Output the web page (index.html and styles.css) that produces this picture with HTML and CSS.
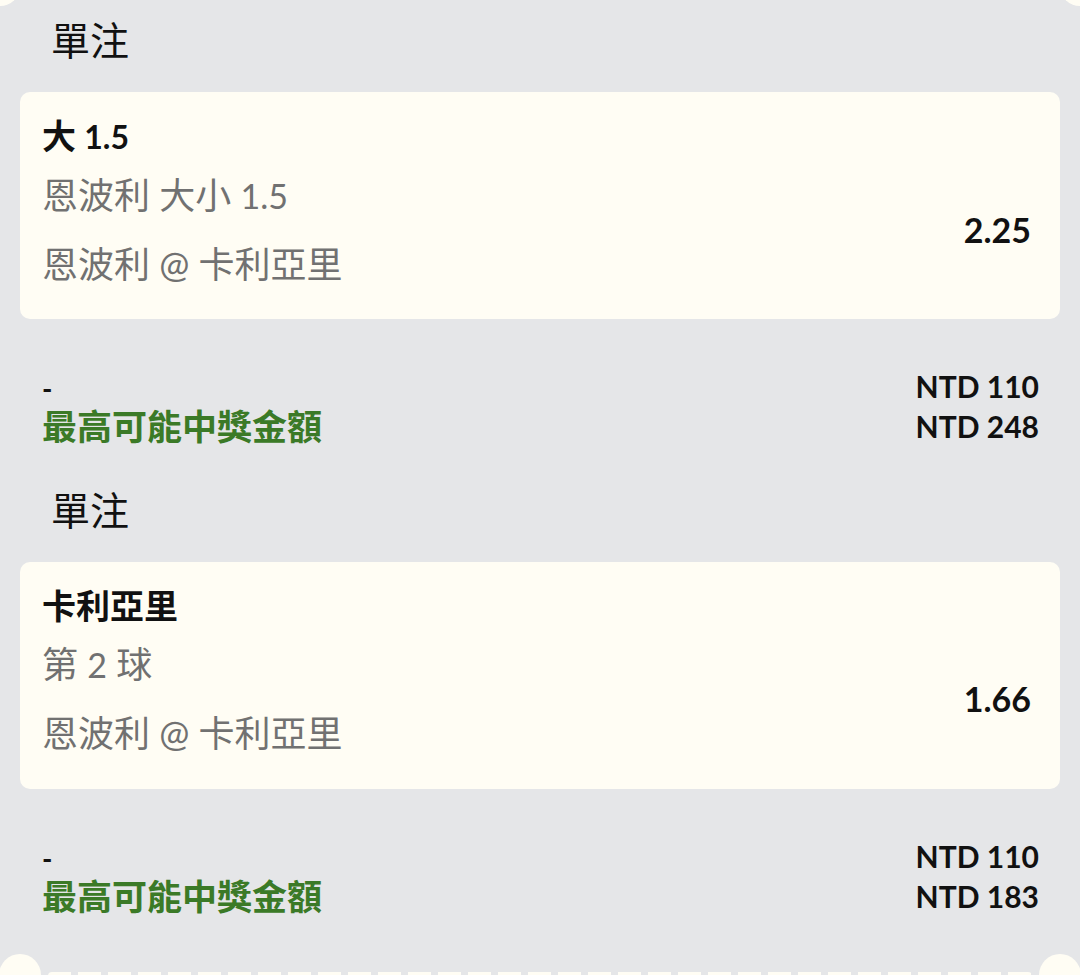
FILE: index.html
```html
<!DOCTYPE html>
<html lang="zh-Hant">
<head>
<meta charset="UTF-8">
<meta name="viewport" content="width=device-width, initial-scale=1.0">
<title>單注</title>
<link rel="stylesheet" href="styles.css">
</head>
<body>

<div class="notch notch-tl"></div>
<div class="notch notch-tr"></div>

<div class="slip">
    <section class="bet">
        <h2 class="bet-type">單注</h2>
        <div class="card">
            <div class="selection">大 <span class="num">1.5</span></div>
            <div class="card-row">
                <div class="details">
                    <p class="market">恩波利 大小 <span class="num">1.5</span></p>
                    <p class="event">恩波利 @ 卡利亞里</p>
                </div>
                <div class="odds">2.25</div>
            </div>
        </div>
        <div class="summary">
            <div class="summary-left">
                <p class="stake">-</p>
                <p class="payout-label">最高可能中獎金額</p>
            </div>
            <div class="summary-right">
                <p>NTD 110</p>
                <p>NTD 248</p>
            </div>
        </div>
    </section>

    <section class="bet">
        <h2 class="bet-type">單注</h2>
        <div class="card">
            <div class="selection">卡利亞里</div>
            <div class="card-row">
                <div class="details">
                    <p class="market">第 <span class="num">2</span> 球</p>
                    <p class="event">恩波利 @ 卡利亞里</p>
                </div>
                <div class="odds">1.66</div>
            </div>
        </div>
        <div class="summary">
            <div class="summary-left">
                <p class="stake">-</p>
                <p class="payout-label">最高可能中獎金額</p>
            </div>
            <div class="summary-right">
                <p>NTD 110</p>
                <p>NTD 183</p>
            </div>
        </div>
    </section>
</div>

<div class="tear"></div>
<div class="notch notch-bl"></div>
<div class="notch notch-br"></div>

</body>
</html>
```

FILE: styles.css
```css
body { margin: 0; height: 975px; overflow: hidden; position: relative; background-color: #e5e6e8; color: #111; font-family: 'Lato', 'Noto Sans CJK TC', sans-serif; }
p { margin: 0; }

.slip { padding: 0 20px; }
.bet { height: 470px; }
.bet-type { margin: 0; padding-left: 31px; height: 92px; line-height: 81px; font-size: 39px; font-weight: 400; }

.card { background-color: #fffdf4; border-radius: 10px; padding: 16px 29px 23px 22px; height: 188px; }
.selection { font-size: 34px; font-weight: 700; line-height: 56px; }
.selection .num { font-size: 32px; }
.card-row { display: flex; justify-content: space-between; align-items: center; }
.details { color: #717171; font-size: 36px; }
.details .num { font-size: 34px; }
.market { line-height: 60px; }
.event { line-height: 68px; padding-top: 4px; }
.odds { font-size: 34px; font-weight: 700; margin-top: -4px; }

.summary { display: flex; justify-content: space-between; padding: 49px 21px 0 22px; }
.summary p { line-height: 40px; }
.summary .payout-label { color: #3b7a27; font-size: 35px; font-weight: 700; line-height: 36px; }
.stake { font-size: 28px; font-weight: 700; }
.summary-right { text-align: right; font-size: 30px; font-weight: 700; margin-top: -2px; }

.notch { position: absolute; background-color: #fffdf4; border-radius: 50%; }
.notch-tl { width: 40px; height: 40px; left: -20px; top: -34px; }
.notch-tr { width: 40px; height: 40px; right: -20px; top: -34px; }
.notch-bl { width: 42px; height: 42px; left: -1px; top: 954px; }
.notch-br { width: 42px; height: 42px; right: -1px; top: 954px; }
.tear { position: absolute; left: 48px; right: 48px; top: 972px; height: 8px; border-radius: 4px; background: repeating-linear-gradient(90deg, #fffdf4 0 23px, transparent 23px 30px); }
```
